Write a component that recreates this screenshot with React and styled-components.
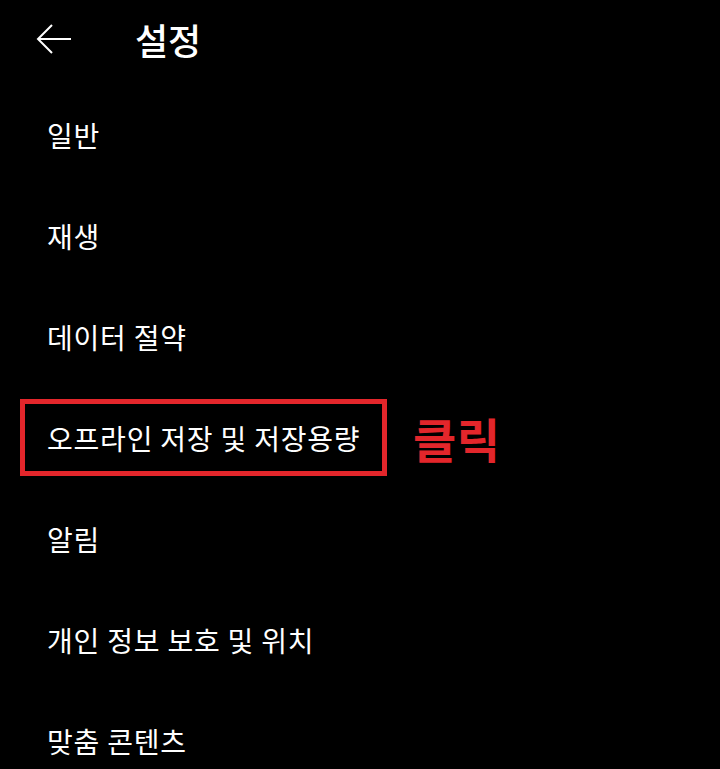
import React from 'react';
import styled, { createGlobalStyle } from 'styled-components';

const GlobalStyle = createGlobalStyle`
  html, body {
    margin: 0;
    padding: 0;
    background: #000;
  }
  body {
    font-family: "Noto Sans CJK KR", "Noto Sans", sans-serif;
    color: #fff;
  }
`;

const Page = styled.div`
  width: 720px;
  height: 769px;
  background: #000;
  overflow: hidden;
`;

const Header = styled.header`
  display: flex;
  align-items: center;
  height: 84px;
  padding-left: 36px;
  box-sizing: border-box;
`;

const BackButton = styled.button`
  display: flex;
  align-items: center;
  justify-content: center;
  width: 36px;
  height: 36px;
  padding: 0;
  margin-top: -6px;
  background: none;
  border: none;
  color: #fff;
  cursor: pointer;
`;

const Title = styled.h1`
  margin: -6px 0 0 63px;
  font-size: 36px;
  font-weight: 500;
  line-height: 1;
`;

const List = styled.ul`
  list-style: none;
  margin: 0;
  padding: 0 0 0 47px;
`;

const Item = styled.li`
  display: flex;
  align-items: center;
  height: 101px;
  font-size: 28px;
  font-weight: 400;
  letter-spacing: 0.8px;
`;

const Highlight = styled.div`
  display: flex;
  align-items: center;
  height: 77px;
  width: 367px;
  box-sizing: border-box;
  margin-left: -27px;
  padding-left: 22px;
  border: 5px solid #e3262b;
`;

const Callout = styled.span`
  margin-left: 26px;
  color: #e3262b;
  font-size: 47px;
  font-weight: 700;
  line-height: 1;
  letter-spacing: 0.5px;
`;

const items = [
  '일반',
  '재생',
  '데이터 절약',
  '오프라인 저장 및 저장용량',
  '알림',
  '개인 정보 보호 및 위치',
  '맞춤 콘텐츠',
];

const HIGHLIGHTED = 3;

const ArrowLeft = () => (
  <svg width="36" height="32" viewBox="0 0 36 32" fill="none" stroke="currentColor" strokeWidth="2">
    <path d="M35 16H2" />
    <path d="M16 2L2 16L16 30" />
  </svg>
);

export default function App() {
  return (
    <Page>
      <GlobalStyle />
      <Header>
        <BackButton aria-label="뒤로">
          <ArrowLeft />
        </BackButton>
        <Title>설정</Title>
      </Header>
      <List>
        {items.map((label, i) =>
          i === HIGHLIGHTED ? (
            <Item key={label}>
              <Highlight>{label}</Highlight>
              <Callout>클릭</Callout>
            </Item>
          ) : (
            <Item key={label}>{label}</Item>
          )
        )}
      </List>
    </Page>
  );
}
